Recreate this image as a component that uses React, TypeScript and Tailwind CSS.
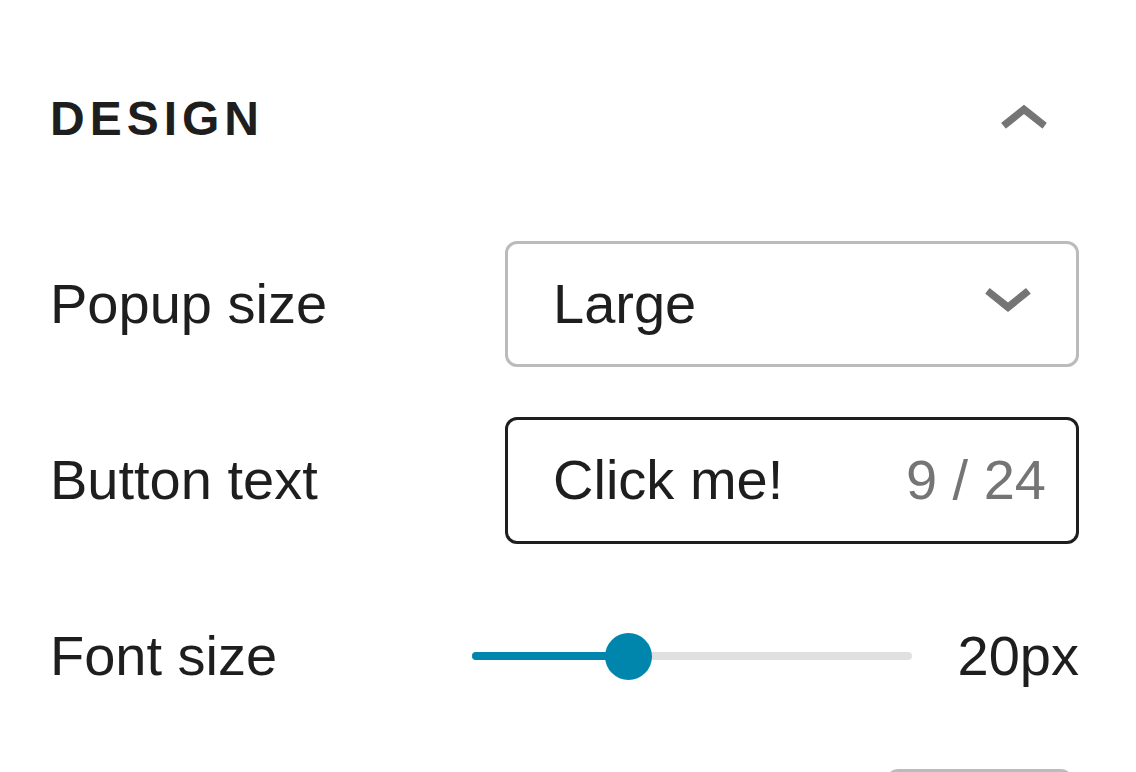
import React from "react";

const font = { fontFamily: '"Liberation Sans", Arial, sans-serif' };

function ChevronUp() {
  return (
    <svg width="96" height="96" viewBox="0 -0.6 24 24" className="shrink-0">
      <path
        d="M6.5 12.4L12 8l5.5 4.4-.9 1.2L12 10l-4.5 3.6-1-1.2z"
        fill="#757575"
        stroke="#757575"
        strokeWidth="0.3"
        strokeLinejoin="round"
      />
    </svg>
  );
}

function ChevronDown() {
  return (
    <svg width="96" height="96" viewBox="0 2.2 24 24" className="shrink-0">
      <path
        d="M17.5 11.6L12 16l-5.5-4.4.9-1.2L12 14l4.5-3.6 1 1.2z"
        fill="#757575"
        stroke="#757575"
        strokeWidth="0.3"
        strokeLinejoin="round"
      />
    </svg>
  );
}

export default function App() {
  const fill = 156;
  return (
    <div
      className="w-[1136px] h-[772px] overflow-hidden bg-white pl-[50px] pr-[57px] flex flex-col text-[#1e1e1e]"
      style={font}
    >
      <div className="mt-[71px] h-[96px] flex items-center justify-between shrink-0">
        <span className="text-[48px] font-bold uppercase tracking-[5px] leading-none">Design</span>
        <div className="mr-[7px]">
          <ChevronUp />
        </div>
      </div>

      <div className="mt-[74px] flex flex-col gap-[50px]">
        <div className="h-[126px] flex items-center">
          <span className="w-[455px] shrink-0 text-[56px] leading-none">Popup size</span>
          <div className="flex-1 h-[126px] border-[3px] border-[#bbbbbb] rounded-[12px] flex items-center justify-between pl-[45px] pr-[20px]">
            <span className="text-[56px] leading-none">Large</span>
            <ChevronDown />
          </div>
        </div>

        <div className="h-[126px] flex items-center">
          <span className="w-[455px] shrink-0 text-[56px] leading-none">Button text</span>
          <div className="flex-1 h-[127px] border-[3px] border-[#1e1e1e] rounded-[12px] flex items-center justify-between pl-[45px] pr-[30px]">
            <span className="text-[56px] leading-none">Click me!</span>
            <span className="text-[56px] leading-none text-[#757575]">9 / 24</span>
          </div>
        </div>

        <div className="h-[126px] flex items-center">
          <span className="w-[422px] shrink-0 text-[56px] leading-none">Font size</span>
          <div className="relative w-[440px] h-[48px] flex items-center shrink-0">
            <div className="w-full h-[8px] rounded-full bg-[#e0e0e0]" />
            <div
              className="absolute left-0 h-[8px] rounded-full bg-[#0086ad]"
              style={{ width: fill }}
            />
            <div
              className="absolute w-[47px] h-[47px] rounded-full bg-[#0086ad]"
              style={{ left: fill - 23.5 }}
            />
          </div>
          <span className="flex-1 text-right text-[56px] leading-none">20px</span>
        </div>

        <div className="h-[126px] flex items-start justify-end">
          <div className="w-[187px] h-[126px] border-[3px] border-[#bbbbbb] rounded-[12px] mr-[6px]" />
        </div>
      </div>
    </div>
  );
}
